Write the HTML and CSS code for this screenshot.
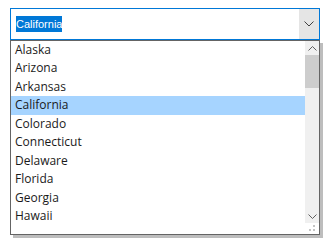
FILE: index.html
```html
<!DOCTYPE html>
<html lang="en">
<head>
    <meta charset="UTF-8">
    <title>State picker</title>
    <link rel="stylesheet" href="styles.css">
</head>
<body>
    <div class="picker">
        <div class="combo">
            <div class="combo-text"><span class="combo-selected">California</span></div>
            <div class="combo-button">
                <svg width="10" height="6" viewBox="0 0 10 6"><path d="M0.5 0.5 L5 5 L9.5 0.5" fill="none" stroke="#404040" stroke-width="1"/></svg>
            </div>
        </div>
        <div class="dropdown">
            <ul class="options">
                <li>Alaska</li>
                <li>Arizona</li>
                <li>Arkansas</li>
                <li class="active">California</li>
                <li>Colorado</li>
                <li>Connecticut</li>
                <li>Delaware</li>
                <li>Florida</li>
                <li>Georgia</li>
                <li>Hawaii</li>
            </ul>
            <div class="scrollbar">
                <div class="scroll-btn">
                    <svg width="9" height="5" viewBox="0 0 9 5"><path d="M0.5 4.5 L4.5 0.5 L8.5 4.5" fill="none" stroke="#606060" stroke-width="1"/></svg>
                </div>
                <div class="scroll-track">
                    <div class="scroll-thumb"></div>
                </div>
                <div class="scroll-btn">
                    <svg width="9" height="5" viewBox="0 0 9 5"><path d="M0.5 0.5 L4.5 4.5 L8.5 0.5" fill="none" stroke="#606060" stroke-width="1"/></svg>
                </div>
                <div class="gripper">
                    <span class="dot dot-a"></span>
                    <span class="dot dot-b"></span>
                    <span class="dot dot-c"></span>
                </div>
            </div>
        </div>
    </div>
</body>
</html>
```

FILE: styles.css
```css
* {
    margin: 0;
    padding: 0;
    box-sizing: border-box;
}

body {
    background: #fff;
    font-family: 'Open Sans', 'Noto Sans', sans-serif;
    color: #000;
}

.picker {
    padding: 8px 10px;
    width: 330px;
}

.combo {
    display: flex;
    width: 310px;
    height: 32px;
    border: 1px solid #0078d7;
    background: #fff;
}

.combo-text {
    flex: 1;
    display: flex;
    align-items: center;
    padding-left: 5px;
}

.combo-selected {
    font-family: 'Liberation Sans', Arial, sans-serif;
    font-size: 11px;
    line-height: 16px;
    background: #0078d7;
    color: #fff;
}

.combo-button {
    width: 20px;
    background: #e5e5e5;
    display: flex;
    align-items: center;
    justify-content: center;
}

.dropdown {
    display: flex;
    width: 310px;
    height: 195px;
    border: 1px solid #646464;
    box-shadow: 3px 3px 0 #bdbdbd;
    background: #fff;
}

.options {
    list-style: none;
    flex: 1;
}

.options li {
    height: 18.45px;
    line-height: 18.45px;
    padding-left: 4px;
    font-size: 12px;
    color: #1a1a1a;
}

.options li.active {
    background: #a6d4ff;
}

.scrollbar {
    width: 14px;
    display: flex;
    flex-direction: column;
    background: #f0f0f0;
}

.scroll-btn {
    height: 14px;
    display: flex;
    align-items: center;
    justify-content: center;
}

.scroll-track {
    flex: 1;
}

.scroll-thumb {
    height: 33px;
    background: #cdcdcd;
}

.gripper {
    height: 11px;
    background: #fff;
    position: relative;
}

.dot {
    position: absolute;
    width: 2px;
    height: 2px;
    background: #c4c4c4;
}

.dot-a { left: 8px; top: 2px; }
.dot-b { left: 4px; top: 6px; }
.dot-c { left: 8px; top: 6px; }
```
